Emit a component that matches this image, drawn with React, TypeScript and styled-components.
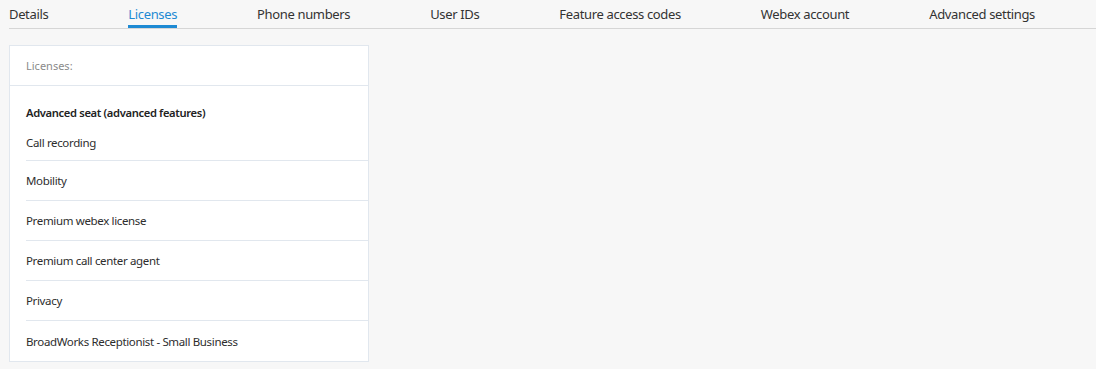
import React from 'react';
import styled, { createGlobalStyle } from 'styled-components';

const tabs = [
    'Details',
    'Licenses',
    'Phone numbers',
    'User IDs',
    'Feature access codes',
    'Webex account',
    'Advanced settings',
];

const licenses = [
    'Mobility',
    'Premium webex license',
    'Premium call center agent',
    'Privacy',
    'BroadWorks Receptionist - Small Business',
];

const GlobalStyle = createGlobalStyle`
    html, body {
        margin: 0;
        padding: 0;
        background: #f7f7f7;
    }
    body {
        font-family: 'Noto Sans', 'Open Sans', sans-serif;
        color: #2d2d2d;
    }
`;

export default function App() {
    return (
        <Page>
            <GlobalStyle />
            <TabBar>
                {tabs.map((t) => (
                    <Tab key={t} active={t === 'Licenses'}>
                        {t}
                    </Tab>
                ))}
            </TabBar>

            <Card>
                <CardHeader>Licenses:</CardHeader>
                <CardBody>
                    <GroupTitle>Advanced seat (advanced features)</GroupTitle>
                    <FirstRow>Call recording</FirstRow>
                    {licenses.map((l) => (
                        <Row key={l}>{l}</Row>
                    ))}
                </CardBody>
            </Card>
        </Page>
    );
}

const Page = styled.div`
    width: 1096px;
    height: 369px;
    padding-left: 9px;
    box-sizing: border-box;
    overflow: hidden;
`;

const TabBar = styled.nav`
    display: flex;
    gap: 80px;
    height: 28px;
    border-bottom: 1px solid #d6d6d6;
`;

const Tab = styled.div<{ active?: boolean }>`
    position: relative;
    font-size: 13px;
    letter-spacing: -0.35px;
    line-height: 28px;
    white-space: nowrap;
    color: ${(p) => (p.active ? '#1e8ad3' : '#333333')};

    &::after {
        content: '';
        display: ${(p) => (p.active ? 'block' : 'none')};
        position: absolute;
        left: 0;
        right: 0;
        bottom: 0;
        height: 3px;
        background: #1e8ad3;
    }
`;

const Card = styled.section`
    margin-top: 16px;
    width: 360px;
    background: #ffffff;
    border: 1px solid #e1e7ee;
    box-sizing: border-box;
`;

const CardHeader = styled.div`
    height: 39px;
    padding-left: 16px;
    display: flex;
    align-items: center;
    font-size: 11px;
    color: #8a8a8a;
    border-bottom: 1px solid #e1e7ee;
`;

const CardBody = styled.div`
    padding: 19px 0 0 16px;
`;

const GroupTitle = styled.div`
    font-size: 11.2px;
    font-weight: 600;
    letter-spacing: -0.35px;
    line-height: 16px;
    color: #222222;
`;

const Row = styled.div`
    height: 40px;
    display: flex;
    align-items: center;
    font-size: 11.5px;
    letter-spacing: -0.35px;
    color: #2d2d2d;
    border-top: 1px solid #e1e7ee;
    box-sizing: border-box;

    &:last-child {
        height: 41px;
    }
`;

const FirstRow = styled(Row)`
    height: 39px;
    padding-top: 3px;
    border-top: none;
`;
